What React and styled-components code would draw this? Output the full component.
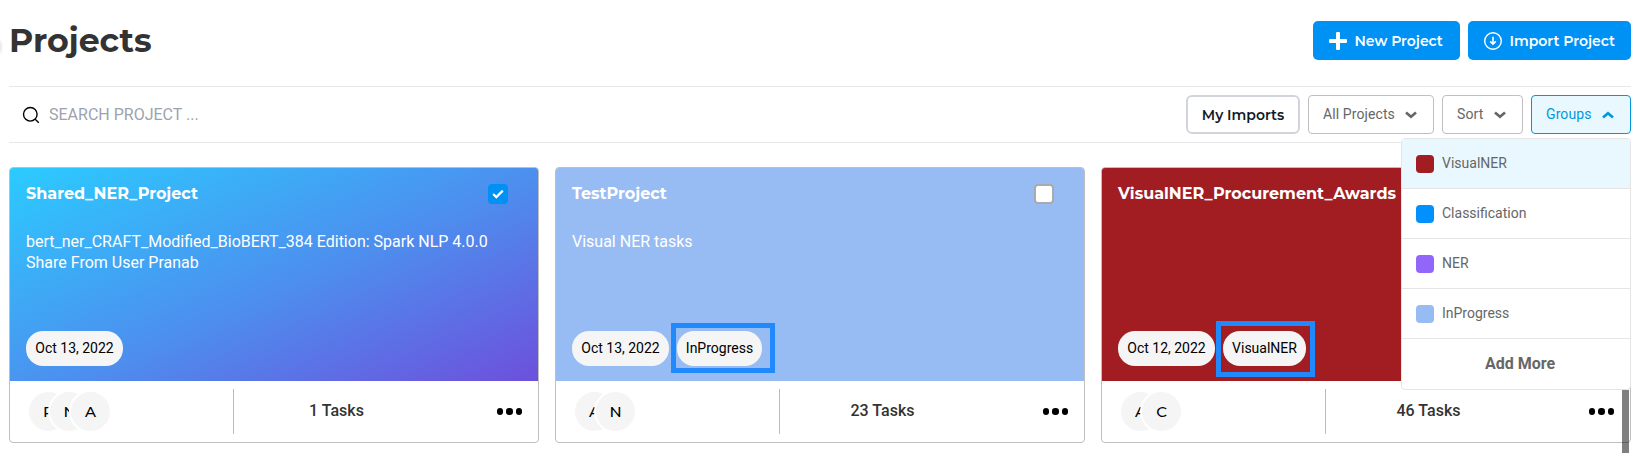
import React from 'react';
import styled, { createGlobalStyle, css } from 'styled-components';

const GlobalStyle = createGlobalStyle`
  * { box-sizing: border-box; }
  body { margin: 0; background: #fff; overflow: hidden; font-family: Roboto, "Liberation Sans", sans-serif; }
  button { font: inherit; margin: 0; padding: 0; border: 0; background: none; }
`;

const display = css`font-family: Montserrat, Inter, sans-serif;`;

const Page = styled.main`
  position: relative;
  width: 1646px;
  height: 453px;
  padding: 0 15px 0 9px;
  overflow: hidden;
`;

const SidebarHandle = styled.div`
  position: absolute;
  top: 37px;
  left: -20px;
  width: 20px;
  height: 20px;
  border-radius: 50%;
  box-shadow: 0 0 4px rgba(0, 0, 0, 0.25);
`;

const Header = styled.header`
  display: flex;
  align-items: flex-start;
  justify-content: space-between;
  height: 86px;
  padding-top: 21px;
`;

const Title = styled.h1`
  ${display}
  margin: 0;
  font-size: 33.2px;
  font-weight: 700;
  line-height: 39px;
  color: #333;
`;

const Actions = styled.div`
  display: flex;
  gap: 8px;
`;

const PrimaryButton = styled.button`
  ${display}
  display: flex;
  align-items: center;
  gap: 8px;
  width: ${p => p.$width}px;
  height: 39px;
  padding-left: 15.5px;
  border-radius: 5px;
  background: #0091f5;
  color: #fff;
  font-size: 14px;
  font-weight: 600;
  white-space: nowrap;
  svg { flex: none; }
`;

const Toolbar = styled.div`
  display: flex;
  align-items: center;
  justify-content: space-between;
  height: 57px;
  border-top: 1px solid #e8e8e8;
  border-bottom: 1px solid #e8e8e8;
`;

const Search = styled.label`
  display: flex;
  align-items: center;
  gap: 9px;
  padding-left: 13px;
  font-size: 16px;
  color: #9ca3af;
`;

const Filters = styled.div`
  display: flex;
  gap: 8px;
`;

const ImportsButton = styled.button`
  ${display}
  width: 114px;
  height: 39px;
  border: 2px solid #d1d5db;
  border-radius: 6px;
  color: #111827;
  font-size: 14px;
  font-weight: 600;
  white-space: nowrap;
`;

const FilterButton = styled.button`
  display: flex;
  align-items: center;
  justify-content: space-between;
  width: ${p => p.$width}px;
  height: 39px;
  padding: 0 16px 1px 14px;
  border: 1px solid ${p => (p.$active ? '#0098da' : '#bfbfbf')};
  border-radius: 4px;
  background: ${p => (p.$active ? '#e9f8ff' : '#fff')};
  color: ${p => (p.$active ? '#0098da' : '#666')};
  font-size: 14px;
  letter-spacing: 0.1px;
  svg { position: relative; top: 1px; }
`;

const Cards = styled.section`
  display: grid;
  grid-template-columns: repeat(3, 530px);
  gap: 16px;
  padding-top: 24px;
`;

const Card = styled.article`
  height: 276px;
  border: 1px solid #bfbfbf;
  border-radius: 4px;
  overflow: hidden;
  background: #fff;
`;

const Cover = styled.div`
  display: flex;
  flex-direction: column;
  height: 213px;
  padding: 16px 30px 15px 16px;
  background: ${p => p.$fill};
  color: #fff;
`;

const CoverTop = styled.div`
  display: flex;
  justify-content: space-between;
  height: 47px;
`;

const Name = styled.h2`
  ${display}
  margin: 0;
  font-size: 16px;
  font-weight: 700;
  line-height: 20px;
  white-space: nowrap;
`;

const Check = styled.span`
  display: flex;
  align-items: center;
  justify-content: center;
  width: 20px;
  height: 20px;
  border-radius: 4px;
  border: 2px solid ${p => (p.$on ? '#0091f5' : '#aaa')};
  background: ${p => (p.$on ? '#0091f5' : '#fff')};
`;

const Description = styled.p`
  flex: 1;
  margin: 0;
  font-size: 16px;
  line-height: 21px;
`;

const Pills = styled.div`
  display: flex;
  gap: 8px;
`;

const Pill = styled.span`
  position: relative;
  display: flex;
  align-items: center;
  justify-content: center;
  width: ${p => p.$width}px;
  height: 35px;
  padding-bottom: 1px;
  border-radius: 17px;
  background: #f5f5f5;
  color: #000;
  font-size: 14px;
  white-space: nowrap;
`;

const Highlight = styled.span`
  position: absolute;
  inset: ${p => p.$inset};
  border: 5px solid #2089fb;
`;

const Footer = styled.footer`
  display: flex;
  align-items: center;
  height: 61px;
`;

const Avatars = styled.div`
  display: flex;
  width: 223px;
  padding-left: 17px;
`;

const Avatar = styled.span`
  ${display}
  display: flex;
  flex: none;
  align-items: center;
  justify-content: center;
  width: 43px;
  height: 43px;
  margin-right: -22px;
  border: 2px solid #fff;
  border-radius: 50%;
  background: #f5f5f5;
  color: #000;
  font-size: 15px;
  font-weight: 500;
`;

const Tasks = styled.span`
  display: flex;
  align-items: center;
  justify-content: center;
  width: 208px;
  height: 45px;
  border-left: 1px solid #bbb;
  padding: 0 2px 2px 0;
  color: #333;
  font-size: 16px;
  font-weight: 500;
`;

const More = styled.button`
  display: flex;
  gap: 3px;
  margin-left: 56px;
`;

const Dot = styled.i`
  width: 6.4px;
  height: 6.4px;
  border-radius: 50%;
  background: #000;
`;

const Menu = styled.div`
  position: absolute;
  top: 138px;
  right: 15px;
  width: 230px;
  height: 252px;
  border: 1px solid #e5e5e5;
  border-radius: 4px;
  background: #fff;
  overflow: hidden;
`;

const MenuItem = styled.div`
  display: flex;
  align-items: center;
  gap: 8px;
  height: 50px;
  padding-left: 14px;
  border-bottom: 1px solid #e5e5e5;
  background: ${p => (p.$active ? '#e9f8ff' : '#fff')};
  color: #666;
  font-size: 14px;
  span { padding-bottom: 1px; }
`;

const Swatch = styled.i`
  width: 18px;
  height: 18px;
  border-radius: 4px;
  background: ${p => p.$color};
`;

const AddMore = styled.div`
  padding-left: 8px;
  color: #666;
  font-size: 16px;
  font-weight: 700;
  line-height: 50px;
  text-align: center;
`;

const Scrollbar = styled.div`
  position: absolute;
  top: 390px;
  right: 17px;
  bottom: 0;
  width: 7px;
  background: rgba(0, 0, 0, 0.5);
`;

const Chevron = ({ up }) => (
  <svg width="12" height="8" viewBox="0 0 12 8" fill="none" stroke="currentColor" strokeWidth="2.6">
    <path d={up ? 'M1 6.5 6 2.2l5 4.3' : 'M1 1.5 6 5.8l5-4.3'} />
  </svg>
);

const PlusIcon = () => (
  <svg width="18" height="18" viewBox="0 0 18 18" fill="#fff">
    <rect x="7" width="4" height="18" rx="1" />
    <rect y="7" width="18" height="4" rx="1" />
  </svg>
);

const ImportIcon = () => (
  <svg width="18" height="18" viewBox="0 0 18 18" fill="none" stroke="#fff">
    <circle cx="9" cy="9" r="8.3" strokeWidth="1.4" />
    <path d="M9 4.8v7.4M6.2 9.4 9 12.2l2.8-2.8" strokeWidth="1.6" />
  </svg>
);

const SearchIcon = () => (
  <svg width="18" height="18" viewBox="0 0 18 18" fill="none" stroke="#000" strokeWidth="1.4">
    <circle cx="8.3" cy="8.3" r="6.8" />
    <path d="m13.2 13.2 3.6 3.6" />
  </svg>
);

const CheckIcon = () => (
  <svg width="12" height="10" viewBox="0 0 12 10" fill="none" stroke="#fff" strokeWidth="2.2">
    <path d="m1.2 5 3.1 3.1L10.8 1.6" />
  </svg>
);

const projects = [
  {
    name: 'Shared_NER_Project', on: true,
    fill: 'linear-gradient(156deg, #2bcbff 0%, #4d8eee 54%, #6d50dc 100%)',
    text: 'bert_ner_CRAFT_Modified_BioBERT_384 Edition: Spark NLP 4.0.0 Share From User Pranab',
    date: 'Oct 13, 2022', people: ['P', 'N', 'A'], tasks: 1,
  },
  {
    name: 'TestProject', fill: '#97bcf4', text: 'Visual NER tasks',
    date: 'Oct 13, 2022', tag: 'InProgress', tagWidth: 85, inset: '-8px -13px -7px -6px',
    people: ['A', 'N'], tasks: 23,
  },
  {
    name: 'VisualNER_Procurement_Awards', fill: '#a11d22', text: '',
    date: 'Oct 12, 2022', tag: 'VisualNER', tagWidth: 83, inset: '-10px -9px -11px -7px',
    people: ['A', 'C'], tasks: 46,
  },
];

const groups = [
  ['VisualNER', '#a11d22'],
  ['Classification', '#0091ff'],
  ['NER', '#9366fa'],
  ['InProgress', '#97bcf4'],
];

const ProjectCard = ({ project: p }) => (
  <Card>
    <Cover $fill={p.fill}>
      <CoverTop>
        <Name>{p.name}</Name>
        <Check $on={p.on}>{p.on && <CheckIcon />}</Check>
      </CoverTop>
      <Description>{p.text}</Description>
      <Pills>
        <Pill $width={97}>{p.date}</Pill>
        {p.tag && <Pill $width={p.tagWidth}>{p.tag}<Highlight $inset={p.inset} /></Pill>}
      </Pills>
    </Cover>
    <Footer>
      <Avatars>{p.people.map(c => <Avatar key={c}>{c}</Avatar>)}</Avatars>
      <Tasks>{p.tasks} Tasks</Tasks>
      <More aria-label="More"><Dot /><Dot /><Dot /></More>
    </Footer>
  </Card>
);

export default function App() {
  return (
    <Page>
      <GlobalStyle />
      <SidebarHandle />
      <Header>
        <Title>Projects</Title>
        <Actions>
          <PrimaryButton $width={147}><PlusIcon />New Project</PrimaryButton>
          <PrimaryButton $width={163}><ImportIcon />Import Project</PrimaryButton>
        </Actions>
      </Header>
      <Toolbar>
        <Search><SearchIcon />SEARCH PROJECT ...</Search>
        <Filters>
          <ImportsButton>My Imports</ImportsButton>
          <FilterButton $width={126}>All Projects<Chevron /></FilterButton>
          <FilterButton $width={81}>Sort<Chevron /></FilterButton>
          <FilterButton $width={100} $active>Groups<Chevron up /></FilterButton>
        </Filters>
      </Toolbar>
      <Cards>{projects.map(p => <ProjectCard key={p.name} project={p} />)}</Cards>
      <Scrollbar />
      <Menu>
        {groups.map(([label, color], i) => (
          <MenuItem key={label} $active={i === 0}><Swatch $color={color} /><span>{label}</span></MenuItem>
        ))}
        <AddMore>Add More</AddMore>
      </Menu>
    </Page>
  );
}
